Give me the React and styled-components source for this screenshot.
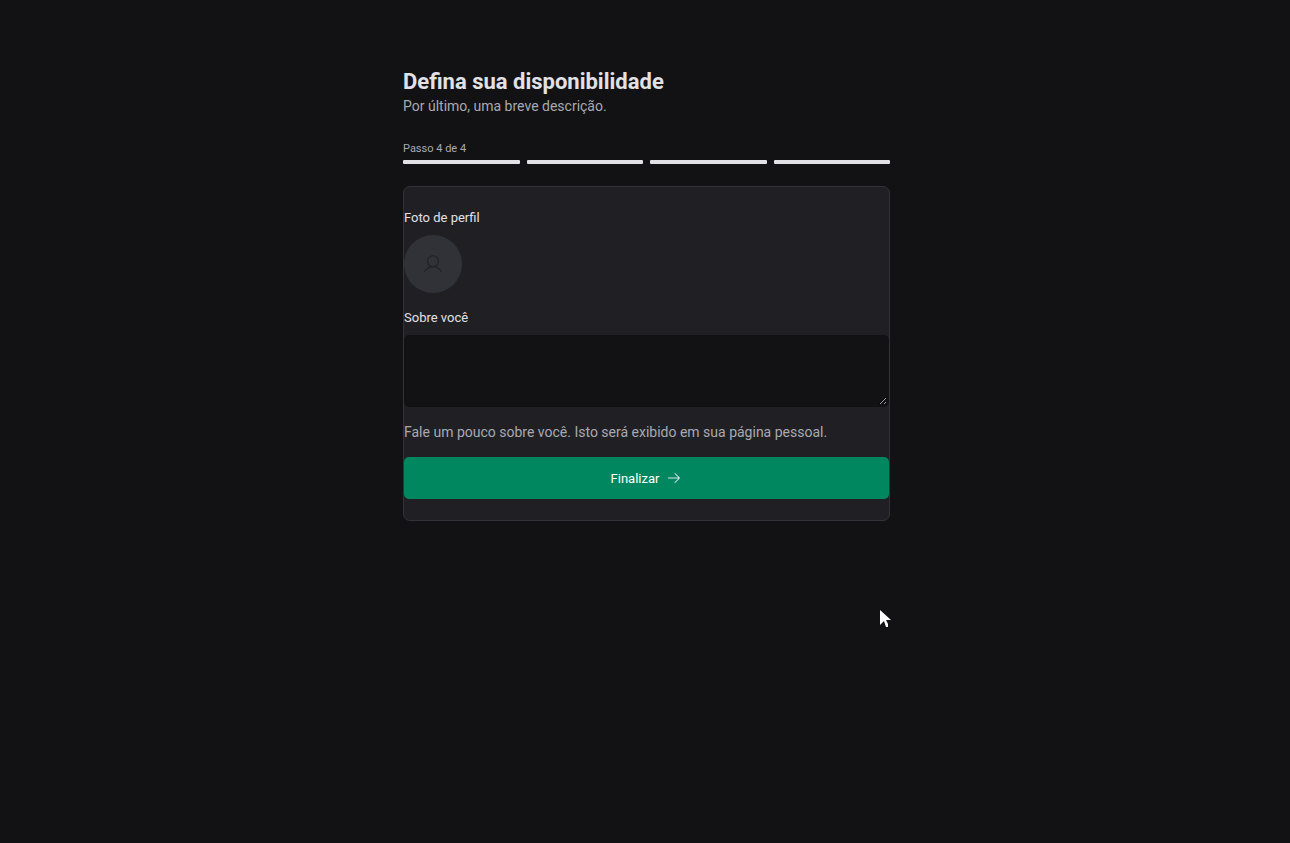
import React from "react";
import styled, { createGlobalStyle } from "styled-components";
import { PiArrowRight, PiUserLight } from "react-icons/pi";

const GlobalStyle = createGlobalStyle`
  * { box-sizing: border-box; margin: 0; padding: 0; }
  body {
    background: #121214;
    color: #e1e1e6;
    font-family: Roboto, "Liberation Sans", sans-serif;
  }
`;

const Page = styled.main`
  width: 100%;
  max-width: 490px;
  margin: 68px auto 16px;
  padding-left: 3px;
`;

const Title = styled.h1`
  font-size: 22px;
  line-height: 28px;
  font-weight: 700;
`;

const Subtitle = styled.p`
  font-size: 14px;
  line-height: 20px;
  color: #a9a9b2;
`;

const Steps = styled.div`
  margin-top: 25px;
`;

const StepLabel = styled.p`
  font-size: 11px;
  line-height: 16px;
  color: #a9a9b2;
`;

const StepTrack = styled.div`
  display: grid;
  grid-template-columns: repeat(4, 1fr);
  gap: 7px;
  margin-top: 3px;
`;

const Step = styled.div`
  height: 4px;
  border-radius: 1px;
  background: #e1e1e6;
`;

const Card = styled.form`
  display: flex;
  flex-direction: column;
  gap: 15px;
  margin-top: 22px;
  padding: 21px 0;
  background: #202024;
  border: 1px solid #323238;
  border-radius: 7px;
`;

const Field = styled.div`
  display: flex;
  flex-direction: column;
  align-items: flex-start;
  gap: 7px;
`;

const FieldLabel = styled.label`
  font-size: 13px;
  line-height: 20px;
`;

const Avatar = styled.div`
  display: flex;
  align-items: center;
  justify-content: center;
  width: 58px;
  height: 58px;
  border-radius: 50%;
  background: #313237;
  color: #202024;
`;

const TextArea = styled.textarea`
  display: block;
  width: 100%;
  height: 72px;
  padding: 10px 14px;
  border: 2px solid #121214;
  border-radius: 5px;
  background: #121214;
  color: #fff;
  font: inherit;
  font-size: 13px;
  resize: vertical;
  outline: 0;
`;

const Hint = styled.p`
  font-size: 14px;
  line-height: 20px;
  color: #a9a9b2;
`;

const SubmitButton = styled.button`
  display: flex;
  align-items: center;
  justify-content: center;
  gap: 7px;
  height: 42px;
  border: 0;
  border-radius: 5px;
  background: #00875f;
  color: #fff;
  font: inherit;
  font-size: 13px;
  cursor: pointer;

  svg {
    color: #d5e6f2;
  }
`;

const Pointer = styled.svg`
  position: fixed;
  left: 880px;
  top: 609px;
  pointer-events: none;
`;

export default function App() {
  return (
    <>
      <GlobalStyle />
      <Page>
        <Title>Defina sua disponibilidade</Title>
        <Subtitle>Por último, uma breve descrição.</Subtitle>
        <Steps>
          <StepLabel>Passo 4 de 4</StepLabel>
          <StepTrack>
            {[1, 2, 3, 4].map((step) => (
              <Step key={step} />
            ))}
          </StepTrack>
        </Steps>
        <Card onSubmit={(event) => event.preventDefault()}>
          <Field>
            <FieldLabel as="span">Foto de perfil</FieldLabel>
            <Avatar>
              <PiUserLight size={22} />
            </Avatar>
          </Field>
          <Field>
            <FieldLabel htmlFor="bio">Sobre você</FieldLabel>
            <TextArea id="bio" aria-describedby="bio-hint" />
          </Field>
          <Hint id="bio-hint">
            Fale um pouco sobre você. Isto será exibido em sua página pessoal.
          </Hint>
          <SubmitButton type="submit">
            Finalizar
            <PiArrowRight size={16} />
          </SubmitButton>
        </Card>
      </Page>
      <Pointer width="12" height="18" viewBox="0 0 12 18" aria-hidden="true">
        <path d="M0 1V16L4 12L6 18H8V15L6 11H11Z" fill="#fff" />
      </Pointer>
    </>
  );
}
